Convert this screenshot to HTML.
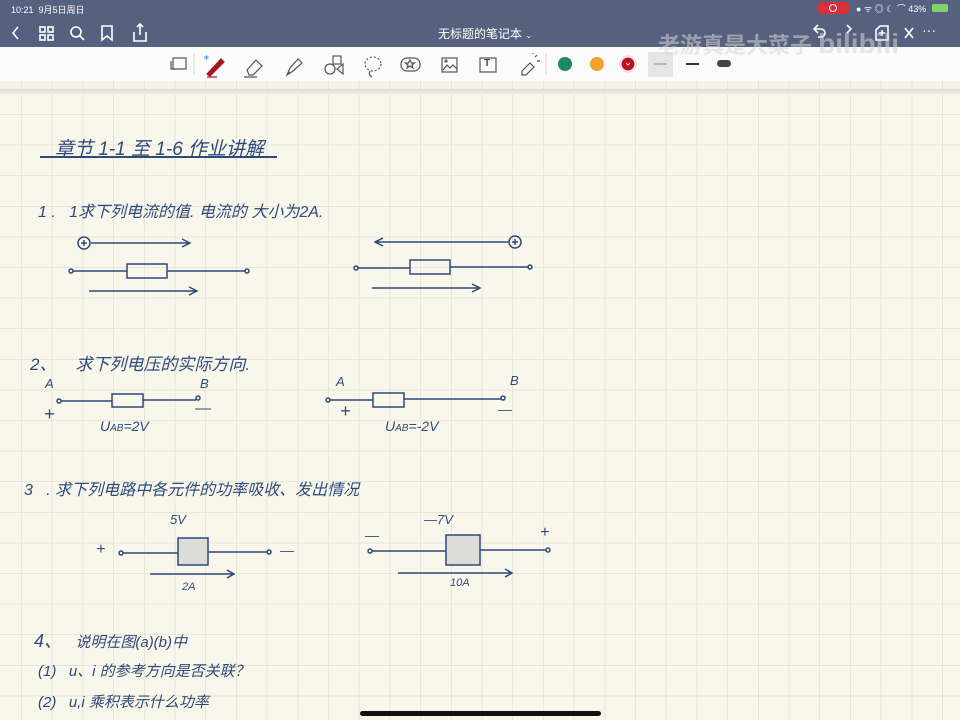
<!DOCTYPE html>
<html><head><meta charset="utf-8"><style>
*{margin:0;padding:0;box-sizing:border-box}
body{width:960px;height:720px;overflow:hidden;background:#f9f7ec;font-family:"Liberation Sans","Noto Sans CJK SC",sans-serif;position:relative}
#hdr{position:absolute;left:0;top:0;width:960px;height:47px;background:#56617f;color:#fff}
#tb{position:absolute;left:0;top:47px;width:960px;height:34px;background:#fbfbfb}
#strip{position:absolute;left:0;top:81px;width:960px;height:8px;background:#f6f3e6;background-image:repeating-linear-gradient(90deg,transparent 0 21px,#e6e3d6 21px 22px,transparent 22px 30.7px)}
#shadow{position:absolute;left:0;top:89px;width:960px;height:6px;background:linear-gradient(#dcdad2,#f3f1e8)}
#paper{position:absolute;left:0;top:95px;width:960px;height:625px;background-color:#f9f7ec;
background-image:repeating-linear-gradient(90deg,transparent 0 21px,#e8e6db 21px 22px,transparent 22px 30.7px),repeating-linear-gradient(180deg,transparent 0 19px,#e8e6db 19px 20px,transparent 20px 30.6px)}
.t{position:absolute;color:#2d4a7a;font-family:"Liberation Sans","Noto Sans CJK SC",sans-serif;white-space:nowrap;font-style:italic}
.w{position:absolute;color:#fff;white-space:nowrap}
</style></head><body>
<div id="hdr">
<div class="w" style="left:11px;top:3px;font-size:9px">10:21&nbsp;&nbsp;9月5日周日</div>
<div class="w" style="left:438px;top:25px;font-size:12px">无标题的笔记本 <span style="font-size:8px">⌄</span></div>
<div style="position:absolute;left:817px;top:2px;width:33px;height:12px;border-radius:6px;background:#d9303c"></div>
<div style="position:absolute;left:829px;top:4px;width:8px;height:8px;border-radius:50%;border:1.5px solid #fff"></div>
<div class="w" style="left:856px;top:2px;font-size:9px">● ᯤ ◎ ☾ ⌒ 43%</div>
<div style="position:absolute;left:932px;top:4px;width:16px;height:8px;border-radius:2px;background:#7fd36a"></div>
<svg style="position:absolute;left:0;top:0" width="960" height="47" fill="none" stroke="#fff" stroke-width="1.6">
<path d="M18 27l-5 6 5 6"/>
<rect x="40" y="27" width="5" height="5"/><rect x="48" y="27" width="5" height="5"/><rect x="40" y="35" width="5" height="5"/><rect x="48" y="35" width="5" height="5"/>
<circle cx="76" cy="32" r="5"/><path d="M80 36l4 4"/>
<path d="M102 26h10v14l-5-4-5 4z"/>
<path d="M134 32v9h12v-9M140 24v11M137 27l3-3 3 3"/>
<path d="M818 33l-4-4 4-4M814 29h7a4 4 0 010 8h-3"/>
<path d="M847 33l4-4-4-4"/>
<path d="M880 26h8v14h-12v-10zM882 30v6M879 33h6"/>
<path d="M905 28l8 10M913 28l-8 10"/>
</svg>
<div class="w" style="left:922px;top:22px;font-size:14px">···</div>
</div>
<div id="tb">
<svg width="960" height="34" fill="none" stroke="#555" stroke-width="1.2">
<rect x="173" y="11" width="13" height="11"/><path d="M171 14v8h4"/>
<line x1="194" y1="6" x2="194" y2="28" stroke="#ddd"/>
<path d="M207 27l14-15 3 3-14 14z" fill="#a81424" stroke="#a81424"/><path d="M207 30h10" stroke="#a81424"/>
<text x="203" y="13" font-size="8" fill="#3a8de0" stroke="none">∗</text>
<path d="M247 23l9-10 6 6-9 9h-4zM244 30h13"/>
<path d="M287 28l3-7 8-9 4 4-9 8zM287 28l3-3"/>
<circle cx="330" cy="22" r="5"/><rect x="333" y="9" width="8" height="8"/><path d="M343 17v10l-6-5z"/>
<ellipse cx="373" cy="17" rx="8" ry="7" stroke-dasharray="2 2"/><path d="M370 24q-2 4 2 6"/>
<rect x="401" y="11" width="19" height="13" rx="6"/><path d="M410 13l1.5 3h3l-2.5 2 1 3-3-2-3 2 1-3-2.5-2h3z"/>
<rect x="442" y="11" width="15" height="14"/><path d="M443 23l4-5 3 3 3-3 4 4"/><circle cx="446" cy="14" r="1"/>
<rect x="480" y="11" width="16" height="14"/>
<path d="M522 24l8-8 4 4-8 8h-4z"/><path d="M535 10l2-2M537 14h3M533 7v-1"/>
<line x1="546" y1="6" x2="546" y2="28" stroke="#ddd"/>
<circle cx="565" cy="17" r="7" fill="#1d8a5e" stroke="none"/>
<circle cx="597" cy="17" r="7" fill="#f0a22e" stroke="none"/>
<circle cx="628" cy="17" r="8" fill="#fff" stroke="#ddd"/>
<circle cx="628" cy="17" r="6.5" fill="#c1101c" stroke="none"/>
<path d="M626 16l2 2 2-2" stroke="#fff" stroke-width="0.8"/>
<rect x="648" y="5" width="25" height="25" fill="#e5e5e5" stroke="none"/>
<line x1="654" y1="17" x2="667" y2="17" stroke="#999"/>
<line x1="686" y1="17" x2="699" y2="17" stroke="#333" stroke-width="2"/>
<rect x="717" y="13" width="14" height="7" rx="3.5" fill="#444" stroke="none"/>
</svg>
<div style="position:absolute;left:484px;top:11px;font-size:10px;font-weight:bold;color:#444">T</div>
</div>
<div style="position:absolute;left:658px;top:28px;font-size:22px;font-weight:bold;color:rgba(215,215,215,0.55);white-space:nowrap">老游真是大菜子 <span style="font-family:'Liberation Sans';font-size:28px">bilibili</span></div>
<div id="strip"></div><div id="shadow"></div>
<div id="paper"></div>

<div class="t" style="left:55px;top:134px;font-size:19px">章节 1-1 至 1-6 作业讲解</div>
<div class="t" style="left:38px;top:198px;font-size:16px">1 .&nbsp;&nbsp; 1求下列电流的值. 电流的 大小为2A.</div>
<div class="t" style="left:30px;top:350px;font-size:17px">2、&nbsp;&nbsp;&nbsp; 求下列电压的实际方向.</div>
<div class="t" style="left:45px;top:376px;font-size:13px">A</div>
<div class="t" style="left:200px;top:376px;font-size:13px">B</div>
<div class="t" style="left:44px;top:404px;font-size:18px">+</div>
<div class="t" style="left:195px;top:400px;font-size:16px">—</div>
<div class="t" style="left:100px;top:418px;font-size:14px">U<span style="font-size:10px">AB</span>=2V</div>
<div class="t" style="left:336px;top:374px;font-size:13px">A</div>
<div class="t" style="left:510px;top:373px;font-size:13px">B</div>
<div class="t" style="left:340px;top:401px;font-size:18px">+</div>
<div class="t" style="left:498px;top:401px;font-size:14px">—</div>
<div class="t" style="left:385px;top:418px;font-size:14px">U<span style="font-size:10px">AB</span>=-2V</div>
<div class="t" style="left:24px;top:476px;font-size:16px">3&nbsp;&nbsp;&nbsp;. 求下列电路中各元件的功率吸收、发出情况</div>
<div class="t" style="left:170px;top:512px;font-size:13px">5V</div>
<div class="t" style="left:96px;top:541px;font-size:16px">+</div>
<div class="t" style="left:280px;top:542px;font-size:14px">—</div>
<div class="t" style="left:182px;top:581px;font-size:11px">2A</div>
<div class="t" style="left:424px;top:512px;font-size:13px">—7V</div>
<div class="t" style="left:365px;top:527px;font-size:14px">—</div>
<div class="t" style="left:540px;top:524px;font-size:16px">+</div>
<div class="t" style="left:450px;top:577px;font-size:11px">10A</div>
<div class="t" style="left:34px;top:627px;font-size:18px">4、 <span style="font-size:15px">&nbsp;&nbsp;说明在图(a)(b)中</span></div>
<div class="t" style="left:38px;top:660px;font-size:15px">(1)&nbsp;&nbsp; u、i 的参考方向是否关联？</div>
<div class="t" style="left:38px;top:691px;font-size:15px">(2)&nbsp;&nbsp; u,i 乘积表示什么功率</div>

<svg style="position:absolute;left:0;top:0" width="960" height="720" fill="none" stroke="#2d4a7a" stroke-width="1.5">
<line x1="40" y1="157" x2="277" y2="157" stroke-width="2"/>
<circle cx="84" cy="243" r="6"/><path d="M81 243h6M84 240v6"/>
<path d="M91 243h98M182 239l8 4-8 4"/>
<circle cx="71" cy="271" r="2"/><circle cx="247" cy="271" r="2"/>
<path d="M73 271h54M167 271h78"/><rect x="127" y="264" width="40" height="14"/>
<path d="M89 291h108M189 287l8 4-8 4"/>
<circle cx="515" cy="242" r="6"/><path d="M512 242h6M515 239v6"/>
<path d="M509 242h-134M383 238l-8 4 8 4"/>
<circle cx="356" cy="268" r="2"/><circle cx="530" cy="267" r="2"/>
<path d="M358 268h52M450 267h78"/><rect x="410" y="260" width="40" height="14"/>
<path d="M372 288h108M472 284l8 4-8 4"/>
<circle cx="59" cy="401" r="2"/><circle cx="198" cy="398" r="2"/>
<path d="M61 401h51M143 400h53"/><rect x="112" y="394" width="31" height="13"/>
<circle cx="328" cy="400" r="2"/><circle cx="503" cy="398" r="2"/>
<path d="M330 400h43M404 399h97"/><rect x="373" y="393" width="31" height="14"/>
<circle cx="121" cy="553" r="2"/><circle cx="269" cy="552" r="2"/>
<path d="M123 553h55M208 552h59"/><rect x="178" y="538" width="30" height="27" fill="#dcdcd8"/>
<path d="M150 574h84M227 570l7 4-7 4"/>
<circle cx="370" cy="551" r="2"/><circle cx="548" cy="550" r="2"/>
<path d="M372 551h74M480 550h66"/><rect x="446" y="535" width="34" height="30" fill="#dcdcd8"/>
<path d="M398 573h114M505 569l7 4-7 4"/>
</svg>
<div style="position:absolute;left:360px;top:711px;width:241px;height:5px;border-radius:3px;background:#111"></div>
</body></html>
